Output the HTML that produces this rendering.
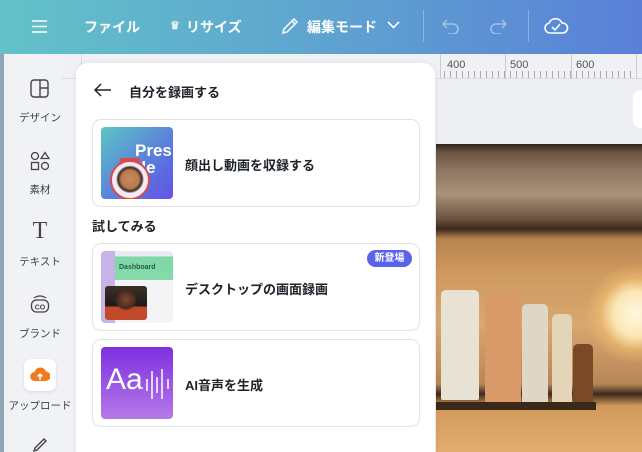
<!DOCTYPE html>
<html><head><meta charset="utf-8"><style>
*{margin:0;padding:0;box-sizing:border-box}
html,body{width:642px;height:452px;overflow:hidden}
body{position:relative;font-family:"Liberation Sans","Noto Sans CJK JP",sans-serif;background:#eceef2}
.abs{position:absolute}
.hdr{left:0;top:0;width:642px;height:54px;background:linear-gradient(90deg,#62c2c8 0%,#5fa7cf 45%,#5a80d8 100%);color:#fff;font-weight:bold;font-size:14px}
.hdr span{position:absolute;top:17px;white-space:nowrap}
.strip{left:0;top:54px;width:4px;height:398px;background:#8ea7b6}
.side{left:4px;top:54px;width:72px;height:398px;background:#f1f2f5}
.si{position:absolute;left:0;width:72px;text-align:center;font-size:10.5px;color:#3b3f47}
.ruler{left:62px;top:54px;width:580px;height:25px;background:#f0f1f4;border-bottom:1px solid #dcdde2}
.ruler span{position:absolute;top:5px;font-size:11px;color:#555}
.panel{left:76px;top:63px;width:359px;height:389px;background:#fff;border-radius:12px 12px 0 0;box-shadow:0 0 6px rgba(0,0,0,.08)}
.card{position:absolute;left:16px;width:328px;border:1px solid #e2e3e7;border-radius:9px;background:#fff}
.th{position:absolute;left:8px;top:7px;width:72px;height:72px;border-radius:4px;overflow:hidden}
.ct{position:absolute;left:92px;font-size:13px;font-weight:bold;color:#1e2229}
.photo{left:436px;top:144px;width:206px;height:308px;overflow:hidden;background:
radial-gradient(circle at 200px 170px,#fff8e0 0,#fbe7b5 22px,rgba(240,190,110,.6) 36px,transparent 50px),
linear-gradient(180deg,#2e241b 0,#6b5440 8px,#8d7660 25px,#a89279 50px,#6a5240 75px,#3b2a1d 85px,#b8844e 95px,#cf9a60 130px,#d8a870 180px,#b88656 240px,#3c2a1c 250px,#d19a5a 262px,#e0ad6e 308px)}
.b{position:absolute;border-radius:5px 5px 2px 2px}
</style></head><body>
<div class="abs hdr">
 <svg class="abs" style="left:31px;top:19px" width="17" height="15"><path d="M1 2h15M1 7.5h15M1 13h15" stroke="#fff" stroke-width="1.6"/></svg>
 <span style="left:84px">ファイル</span>
 <span style="left:170px;font-size:11px;top:19px;opacity:.85">♛</span>
 <span style="left:186px">リサイズ</span>
 <svg class="abs" style="left:280px;top:16px" width="20" height="20"><path d="M3 17l1-4L14 3l3 3L7 16z M12 5l3 3" fill="none" stroke="#fff" stroke-width="1.5"/></svg>
 <span style="left:307px">編集モード</span>
 <svg class="abs" style="left:387px;top:21px" width="13" height="9"><path d="M1 1l5.5 5.5L12 1" fill="none" stroke="#fff" stroke-width="1.6"/></svg>
 <div class="abs" style="left:423px;top:10px;width:1px;height:32px;background:rgba(255,255,255,.3)"></div>
 <svg class="abs" style="left:442px;top:18px" width="20" height="16"><path d="M5 2L1 6l4 4M1 6h10a5 5 0 010 10H6" fill="none" stroke="rgba(255,255,255,.45)" stroke-width="1.5"/></svg>
 <svg class="abs" style="left:487px;top:18px" width="20" height="16"><path d="M15 2l4 4-4 4M19 6H9a5 5 0 000 10h5" fill="none" stroke="rgba(255,255,255,.45)" stroke-width="1.5"/></svg>
 <div class="abs" style="left:528px;top:10px;width:1px;height:32px;background:rgba(255,255,255,.3)"></div>
 <svg class="abs" style="left:543px;top:14px" width="26" height="24"><path d="M7 19a5 5 0 01-1-9.9A7 7 0 0119 9a5 5 0 011 10z" fill="none" stroke="#fff" stroke-width="1.6"/><path d="M9 13l3 3 5-6" fill="none" stroke="#fff" stroke-width="1.6"/></svg>
</div>
<div class="abs strip"></div>
<div class="abs side">
 <svg class="abs" style="left:26px;top:25px" width="20" height="20"><rect x="1" y="1" width="17" height="17" rx="3" fill="none" stroke="#444" stroke-width="1.4"/><path d="M10 1v17M10 9h8" stroke="#444" stroke-width="1.4"/></svg>
 <div class="si" style="top:56px">デザイン</div>
 <svg class="abs" style="left:26px;top:97px" width="20" height="20"><circle cx="5" cy="5" r="3.5" fill="none" stroke="#444" stroke-width="1.3"/><path d="M15 1.5l4 6h-8z" fill="none" stroke="#444" stroke-width="1.3"/><rect x="1.5" y="11.5" width="7" height="7" fill="none" stroke="#444" stroke-width="1.3"/><circle cx="15" cy="15" r="3.5" fill="none" stroke="#444" stroke-width="1.3"/></svg>
 <div class="si" style="top:128px">素材</div>
 <div class="abs" style="left:0;width:72px;text-align:center;top:164px;font-family:'Liberation Serif',serif;font-size:24px;color:#444">T</div>
 <div class="si" style="top:200px">テキスト</div>
 <svg class="abs" style="left:26px;top:240px" width="20" height="20"><rect x="1.5" y="6" width="17" height="12" rx="5" fill="none" stroke="#444" stroke-width="1.3"/><path d="M4 4q6-4 12 0" fill="none" stroke="#444" stroke-width="1.3"/><text x="10" y="15.5" font-size="7" text-anchor="middle" fill="#444" font-family="Liberation Sans" font-weight="bold">CO</text></svg>
 <div class="si" style="top:272px">ブランド</div>
 <div class="abs" style="left:20px;top:305px;width:32px;height:32px;background:#fff;border-radius:7px;box-shadow:0 1px 3px rgba(0,0,0,.1)">
  <svg class="abs" style="left:6px;top:7px" width="20" height="16"><path d="M5 15a4.5 4.5 0 01-.5-9A6 6 0 0116 5.5a4.7 4.7 0 01-.5 9.5z" fill="#f07a1f"/><path d="M10 14V8M7.5 10.5L10 8l2.5 2.5" fill="none" stroke="#fff" stroke-width="1.5"/></svg>
 </div>
 <div class="si" style="top:344px;left:-4px;width:80px">アップロード</div>
 <svg class="abs" style="left:28px;top:383px" width="18" height="15"><path d="M2 14l3-1 9-9-2-2-9 9z" fill="none" stroke="#444" stroke-width="1.4"/></svg>
</div>
<div class="abs ruler">
 <span style="left:385px">400</span><span style="left:448px">500</span><span style="left:514px">600</span>
 <div class="abs" style="left:0;top:0;width:20px;height:25px;border-right:1px solid #dcdde2"></div>
 <div class="abs" style="left:382px;top:17px;width:198px;height:7px;background:repeating-linear-gradient(90deg,#aaa 0 1px,transparent 1px 6px)"></div>
 <div class="abs" style="left:378px;top:0;width:1px;height:25px;background:#ccc"></div>
 <div class="abs" style="left:443px;top:0;width:1px;height:25px;background:#ccc"></div>
 <div class="abs" style="left:509px;top:0;width:1px;height:25px;background:#ccc"></div>
 <div class="abs" style="left:574px;top:0;width:1px;height:25px;background:#ccc"></div>
</div>
<div class="abs" style="left:633px;top:90px;width:20px;height:38px;background:#fff;border-radius:8px"></div>
<div class="abs photo">
 <div class="b" style="left:5px;top:146px;width:38px;height:110px;background:#e8e2d4"></div>
 <div class="b" style="left:49px;top:150px;width:36px;height:110px;background:#d99a6a"></div>
 <div class="b" style="left:86px;top:160px;width:26px;height:100px;background:#e0d6c8"></div>
 <div class="b" style="left:116px;top:170px;width:20px;height:90px;background:#e4d4b8"></div>
 <div class="b" style="left:137px;top:200px;width:20px;height:60px;background:#7a4a28"></div>
 <div class="abs" style="left:0;top:258px;width:160px;height:8px;background:#3a2818"></div>
</div>
<div class="abs panel">
 <svg class="abs" style="left:18px;top:20px" width="18" height="14"><path d="M7 1L1 7l6 6M1 7h16" fill="none" stroke="#222" stroke-width="1.5"/></svg>
 <div class="abs" style="left:53px;top:19px;font-size:13px;font-weight:bold;color:#1e2229">自分を録画する</div>
 <div class="card" style="top:56px;height:88px">
  <div class="th" style="background:linear-gradient(135deg,#5cc4c4,#5a6fe0 70%,#6653e6)">
   <div class="abs" style="left:34px;top:14px;color:#fff;font-weight:bold;font-size:17px">Pres</div>
   <div class="abs" style="left:30px;top:31px;color:#fff;font-weight:bold;font-size:17px">itle</div>
   <div class="abs" style="left:9px;top:33px;width:40px;height:40px;border-radius:50%;background:radial-gradient(circle at 50% 48%,#c98a5c 0,#b77a50 9px,#3a2a22 12px,#f5eaf5 14px);border:2px solid #d94a4a"></div>
   <div class="abs" style="left:19px;top:31px;width:20px;height:4px;background:#d94a4a"></div>
  </div>
  <div class="ct" style="top:35px">顔出し動画を収録する</div>
 </div>
 <div class="abs" style="left:16px;top:153px;font-size:13px;font-weight:bold;color:#1e2229">試してみる</div>
 <div class="card" style="top:180px;height:88px">
  <div class="th" style="background:linear-gradient(180deg,#e9e8f3 0,#e9e8f3 5px,#7ed7a5 6px,#86dba9 40%,#f4f4f7 40%)">
   <div class="abs" style="left:0;top:0;width:14px;height:72px;background:#c8b3e8"></div>
   <div class="abs" style="left:18px;top:13px;font-size:7px;color:#1f5a4c;font-weight:bold">Dashboard</div>
   <div class="abs" style="left:4px;top:35px;width:42px;height:34px;border-radius:3px;background:radial-gradient(circle at 50% 40%,#7a4a35 0,#4a2a20 9px,transparent 11px),linear-gradient(180deg,#3a3028,#1f1a18 60%,#c24a2a 60%)"></div>
  </div>
  <div class="ct" style="top:35px">デスクトップの画面録画</div>
  <div class="abs" style="left:274px;top:6px;width:45px;height:17px;border-radius:9px;background:#5a63ea;color:#fff;font-size:10px;font-weight:bold;text-align:center;line-height:17px">新登場</div>
 </div>
 <div class="card" style="top:276px;height:88px">
  <div class="th" style="background:linear-gradient(180deg,#7e2fe0,#b57ae8)">
   <div class="abs" style="left:5px;top:16px;color:#fff;font-size:30px">Aa</div>
   <svg class="abs" style="left:44px;top:20px" width="26" height="34"><path d="M2 12v12M7 4v28M12 10v16M17 2v30M23 12v10" stroke="#fff" stroke-width="1.5"/></svg>
  </div>
  <div class="ct" style="top:35px">AI音声を生成</div>
 </div>
</div>
</body></html>
